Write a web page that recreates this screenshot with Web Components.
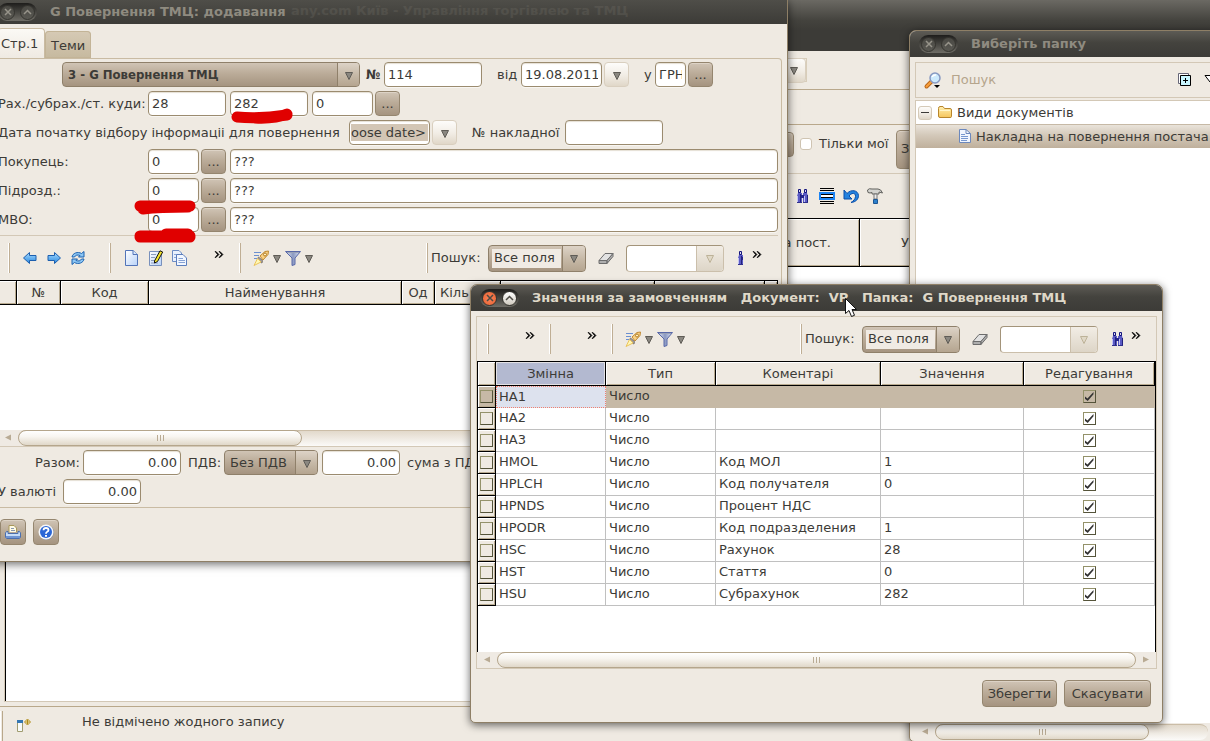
<!DOCTYPE html>
<html lang="uk">
<head>
<meta charset="utf-8">
<title>Повернення ТМЦ</title>
<style>
html,body{margin:0;height:100%;overflow:hidden;background:#efeae2}
body{font:13px/16px "DejaVu Sans",Verdana,sans-serif;color:#3c3b37}
</style>
</head>
<body>
<trade-desktop></trade-desktop>
<script>
const BASE = `
*{box-sizing:border-box}
button,input,select{font:inherit;color:inherit;margin:0}
:host([hidden]){display:none}
`;
const TAN = 'linear-gradient(#d0c4b5,#bbac99 45%,#a59480)';
const CREAM = 'linear-gradient(#fdfcfa,#f1ece4 55%,#e0d7c8)';
function define(name, render, after) {
  customElements.define(name, class extends HTMLElement {
    constructor() { super(); this.attachShadow({ mode: 'open' }); }
    connectedCallback() {
      if (this.shadowRoot.childNodes.length) return;
      const t = document.createElement('template');
      t.innerHTML = render(this);
      this.shadowRoot.append(t.content.cloneNode(true));
      if (after) after(this);
    }
  });
}
const attr = (el, n, d = '') => el.hasAttribute(n) ? el.getAttribute(n) : d;

/* ---------- icons ---------- */
const binoBody = `<path d="M3 2h3v3h1v10H2V8l1-3zM9 2h3v3l1 3v7H8V5h1z" fill="#5a5ac4"/><path d="M3.500 1.500h2v3h-2zM9.500 1.500h2v3h-2z" fill="#d8d8f4" stroke="#14147c"/><path d="M6 7h3v3H6z" fill="#23238c"/><path d="M2 8h1v6H2zM9 8h1v6H9z" fill="#c4c4f4"/><path d="M5 6h1v9H5zM12 7h1v8h-1z" fill="#22227e"/><path d="M2 14h5v1H2zM8 14h5v1H8z" fill="#30308c"/>`;
const ICONS = {
  back: `<path d="M1.500 8L7.500 2.500V5.500H14V10.500H7.500V13.500Z" fill="url(#g)" stroke="#1c5fae"/>`,
  forward: `<path d="M14.500 8L8.500 2.500V5.500H2V10.500H8.500V13.500Z" fill="url(#g)" stroke="#1c5fae"/>`,
  refresh: `<path d="M2 7a6 5 0 0 1 9.500-3.500L14 1.500V7H8.500L10 5.500A4 3 0 0 0 4.500 7Z" fill="#8cc6f4" stroke="#1c62b0"/><path d="M14 9a6 5 0 0 1-9.500 3.500L2 14.500V9h5.500L6 10.500A4 3 0 0 0 11.500 9Z" fill="#8cc6f4" stroke="#1c62b0"/>`,
  blank: `<path d="M2.500 .500H10L14.500 4.500V15.500H2.500Z" fill="url(#p)" stroke="#5274b8"/><path d="M10 .500V4.500H14.500" fill="#d8e6fa" stroke="#5274b8"/>`,
  edit: `<path d="M2.500 1.500H14.500V15.500H2.500Z" fill="url(#p)" stroke="#7890bc"/><path d="M4 4.500H9M4 7.500H8M4 10.500H11M4 13H11" stroke="#8a9cbc"/><path d="M7.500 11L13 .800L15.700 2L10.500 11.500L7.500 13Z" fill="#f5e42a" stroke="#111"/>`,
  copy: `<path d="M1.500 .500H8L10.500 3V11.500H1.500Z" fill="#e9f1fd" stroke="#6c8cc4"/><path d="M3 4.500H9M3 7.500H9" stroke="#8ca8d8"/><path d="M5.500 4.500H12L15.500 8V15.500H5.500Z" fill="#f2f7ff" stroke="#5c7ebc"/><path d="M7.500 8.500H12M7.500 10.500H14M7.500 12.500H14" stroke="#86a2d4"/>`,
  rocket: `<path d="M1 2.500H8M1 5.500H6M1 8.500H4" stroke="#6b8fd0"/><path d="M7 6L12 1.500L15.500 1L15 4.500L10 10Z" fill="#f9d184" stroke="#c08a34"/><circle cx="12" cy="4.500" r="1.500" fill="#fff3c8" stroke="#b07a24"/><path d="M5.500 7L9.500 10.500L9 13L7 12L4.500 9Z" fill="#a59d96" stroke="#817b76"/><path d="M4.500 8.500L1 15.500L8 12Z" fill="#fff8b4" stroke="#ebc45c"/>`,
  funnel: `<path d="M.500 1.500H15.500L10 8V14.500L7 15.500V8Z" fill="url(#f)" stroke="#5868a8"/><path d="M2 2.500H14" stroke="#99a2b8"/>`,
  eraser: `<path d="M1 10.500L7 3.500H15L9 10.500Z" fill="#e2e2e2" stroke="#6c6c6c"/><path d="M1 10.500H9V13.500H1ZM9 10.500L15 3.500V6.500L9 13.500Z" fill="#aeaeae" stroke="#6c6c6c"/>`,
  bino: binoBody,
  rows: `<path d="M1 .500H15M1 2.500H15M1 13.500H15M1 15.500H15" stroke="#000"/><path d="M1 5H15V11H1Z" fill="#fff" stroke="#1c84f4" stroke-width="2"/><path d="M2 6.500H14M2 9.500H14" stroke="#000"/>`,
  undo: `<path d="M1 2V11H9L6 8C9 4 13 5 12.500 8.500C12.300 11 10.500 13 8 14.500C13 14 15.500 11 15.500 7.500C15 2 8 1 4 5.500Z" fill="#2382e0" stroke="#0c4ea8"/>`,
  hammer: `<path d="M.500 2Q2 0 5 1H11Q14 1 15.500 5L12 4V6H5V4.500L3 5L1 4.500Z" fill="#d4d4d0" stroke="#62625e"/><path d="M7 6H10V11H7Z" fill="#ececec" stroke="#777"/><path d="M6.500 11.500H10.500V15.500H6.500Z" fill="#2d80cc" stroke="#1d5794"/>`,
  search: `<path d="M1.500 14.500L6.500 9.500" stroke="#b8661a" stroke-width="4" stroke-linecap="round"/><path d="M1.500 14.500L6.500 9.500" stroke="#f9a03c" stroke-width="2" stroke-linecap="round"/><circle cx="10" cy="6" r="5" fill="#cdeafc" stroke="#8798c0" stroke-width="1.500"/><path d="M7 5A4 4 0 0 1 11 3" stroke="#fff" fill="none" stroke-width="1.500"/><path d="M9 13H15L12 16Z" fill="#000"/>`,
  expand: `<path d="M1.500 1.500H11.500V11.500H1.500Z" fill="#fff" stroke="#667"/><path d="M3.500 3.500H13.500V13.500H3.500Z" fill="#c9f6ff" stroke="#000"/><path d="M6 8.500H11M8.500 6V11" stroke="#000"/>`,
  folder: `<path d="M1.500 4.500Q1.500 2.500 3 2.500H6L7.500 4.500H13Q14.500 4.500 14.500 6V12.500Q14.500 13.500 13 13.500H3Q1.500 13.500 1.500 12Z" fill="url(#y)" stroke="#b8862c"/><path d="M3 6.500H13" stroke="#fff6cc"/>`,
  doc: `<path d="M2.500 1.500H9L13.500 5.500V14.500H2.500Z" fill="#f1f6fe" stroke="#6c88bc"/><path d="M9 1.500V5.500H13.500" fill="none" stroke="#6c88bc"/><path d="M4 6.500H8M4 8.500H11M4 10.500H11M4 12.500H10" stroke="#7898d0"/>`,
  print: `<path d="M4 8V1.500H9L11.500 4V8" fill="#fffbe6" stroke="#a89858"/><path d="M6 4.500H9M6 6.500H10" stroke="#8897b0"/><path d="M1.500 7.500H3V9.500H13V7.500H14.500L15.500 9V13.500L14 14.500H2L.500 13.500V9Z" fill="#c6dcf8" stroke="#4b6fae"/><path d="M1 12H15V14H1Z" fill="#6f94d2"/>`,
  help: `<circle cx="8.500" cy="8.500" r="7.500" fill="#8b93a0"/><circle cx="8" cy="8" r="7.500" fill="#f4f6fa"/><circle cx="8" cy="8" r="6" fill="#2a66d6"/><path d="M5.500 6.200Q5.600 4 8 4Q10.500 4 10.500 6Q10.500 7 9.200 7.800Q8 8.500 8 9.800" fill="none" stroke="#fff" stroke-width="1.800"/><path d="M7 11H9V12.800H7Z" fill="#fff"/>`,
  newview: `<path d="M1.500 5.500H6.500V15.500H1.500Z" fill="#f8fbfa" stroke="#a09c70"/><path d="M1 4H7V7H1Z" fill="#3477b4"/><path d="M11.500 3L14.500 6L11.500 9L8.500 6Z" fill="#fff8c8" stroke="#ae8a1c"/><path d="M11.500 4V8M9.500 6H13.500" stroke="#ae8a1c"/>`,
  more: `<path d="M1 1.500H2L5 4.500L2 7.500H1L3.500 4.500ZM5 1.500H6L9 4.500L6 7.500H5L7.500 4.500Z" fill="#000" stroke="#000" stroke-width=".6"/>`,
  down: `<path d="M1.500 2.500H8.500L5 9.500Z" fill="#8a8780" stroke="#5f5c56"/>`,
  downpale: `<path d="M1.500 2.500H8.500L5 9.500Z" fill="#e0d8c6" stroke="#bdb298"/>`,
  left: `<path d="M7 1.500V7.500L1 4.500Z" fill="#b9ab94"/>`,
  right: `<path d="M1 1.500V7.500L7 4.500Z" fill="#b9ab94"/>`
};
const SMALL = { more: 10, down: 10, downpale: 10, left: 8, right: 8 };
define('tool-icon', el => {
  const n = attr(el, 'name'), s = SMALL[n] || 16;
  return `<style>:host{display:inline-flex;flex:none;width:${s}px;height:${s === 16 ? 17 : 10}px}svg{display:block;overflow:visible}</style>
  <svg width="${s}" height="${s === 16 ? 17 : 10}" fill="none" aria-hidden="true"><defs>
  <linearGradient id="g" x2="0" y2="1"><stop stop-color="#a8dcff"/><stop offset="1" stop-color="#2888e0"/></linearGradient>
  <linearGradient id="p" x2="1" y2="1"><stop stop-color="#fff"/><stop offset="1" stop-color="#b8d2f8"/></linearGradient>
  <linearGradient id="f"><stop stop-color="#e8eefa"/><stop offset=".5" stop-color="#8a98c0"/><stop offset="1" stop-color="#dfe6f8"/></linearGradient>
  <linearGradient id="y" x2="0" y2="1"><stop stop-color="#fff0b0"/><stop offset="1" stop-color="#f5c55c"/></linearGradient></defs>${ICONS[n]}</svg>`;
});

/* ---------- small controls ---------- */
define('text-field', el => `<style>${BASE}
:host{display:flex;align-items:center}
label{flex:none;width:var(--label,auto);white-space:nowrap}
:host([bold]) label{font-family:"DejaVu Sans Condensed","DejaVu Sans",sans-serif;font-weight:bold}
input{flex:1;min-width:0;height:25px;padding:0 3px;background:#fff;border:1px solid #9b8b6f;border-radius:4px;box-shadow:inset 0 1px 1px #e5dfd4,0 1px 0 #f8f6f2;outline:0}
:host([width]) input{flex:none;width:${attr(el, 'width', 50)}px}
:host([numeric]) input{text-align:right}
:host([picked]) input{padding:3px 1px;background:linear-gradient(#d3c6b5,#d3c6b5) content-box,#fff}
</style>${el.hasAttribute('label') ? `<label for="i">${attr(el, 'label')}</label>` : ''}<input id="i" value="${attr(el, 'value').replace('>', '&gt;')}" ${el.hasAttribute('label') ? '' : `aria-label="${attr(el, 'hint', 'Значення')}"`}>`);

define('push-button', el => `<style>${BASE}
:host{display:inline-flex;flex:none}
button{display:flex;align-items:center;justify-content:center;width:25px;height:25px;padding:0;background:${TAN};border:1px solid #95866f;border-radius:4px;box-shadow:inset 0 1px 0 #ddd3c6;white-space:nowrap}
:host([pale]) button{background:${CREAM};border-color:#d9cfbf;box-shadow:none}
:host([square]) button{width:26px;height:26px}
:host([wide]) button{width:auto;min-width:var(--min,75px);height:27px;padding:0 4px}
:host([tall]) button{width:60px;height:39px;padding:0 4px;justify-content:flex-start}
</style><button type="button" aria-label="${attr(el, 'hint', 'Дія')}"><slot></slot></button>`,
  el => { if (!el.hasAttribute('hint')) el.shadowRoot.querySelector('button').removeAttribute('aria-label'); });

define('combo-box', el => `<style>${BASE}
:host{display:flex;align-items:center}
label{flex:none;width:var(--label,auto);white-space:nowrap}
.box{display:grid;grid-template-columns:1fr 22px;flex:1;height:25px;background:${TAN};border:1px solid #8f806a;border-radius:4px;overflow:hidden}
select{grid-area:1/1/2/3;appearance:none;width:100%;padding:0 26px 0 5px;border:0;background:transparent;outline:0}
.arrow{grid-area:1/2;display:flex;align-items:center;justify-content:center;border-left:1px solid #8f806a;background:linear-gradient(#ddd3c7,#c7baa8 50%,#b5a590);pointer-events:none}
:host([bold]) select{font-family:"DejaVu Sans Condensed","DejaVu Sans",sans-serif;font-weight:bold}
:host([framed]) .box{height:27px;grid-template-columns:1fr 23px}
:host([framed]) select{grid-area:1/1;margin:3px;width:calc(100% - 4px);height:19px;padding:0 2px;background:#f0ebe4}
:host([white]) .box{height:27px;grid-template-columns:1fr 27px;background:#fff;border-color:#a3947a #cbbfab #cbbfab #a3947a}
:host([white]) .arrow{background:linear-gradient(#f2ede5,#ddd5c7);border-left:1px solid #cbbfab}
</style>${el.hasAttribute('label') ? `<label for="s">${attr(el, 'label')}</label>` : ''}<span class="box"><select id="s" ${el.hasAttribute('label') ? '' : `aria-label="${attr(el, 'hint', 'Вибір')}"`}><option>${attr(el, 'value')}</option></select><span class="arrow"><tool-icon name="${el.hasAttribute('white') ? 'downpale' : 'down'}"></tool-icon></span></span>`);

define('scroll-bar', el => `<style>${BASE}
:host{display:grid;grid-template-columns:20px 1fr 20px;align-items:center;height:16px;background:#efeae3}
tool-icon{justify-self:center}
.track{height:16px;border-top:1px solid #cbbda7;border-radius:8px;background:linear-gradient(#e2d9cb,#fbfaf8)}
.thumb{display:flex;align-items:center;justify-content:center;gap:2px;width:var(--thumb,100%);height:16px;margin-top:-1px;border:1px solid #b5a68c;border-radius:8px;background:linear-gradient(#fff,#f8f5f0 40%,#e0d8c9)}
i{width:1px;height:6px;border-left:1px solid #b9ab94}
</style><tool-icon name="left"></tool-icon><div class="track"><div class="thumb"><i></i><i></i><i></i></div></div><tool-icon name="right"></tool-icon>`);

/* ---------- toolbars ---------- */
define('tool-group', el => `<style>${BASE}
:host{display:flex;align-items:center;gap:8px;height:30px;padding-left:13px;border-left:1px solid #fff;box-shadow:inset 1px 0 0 #bfae94}
::slotted([name=down]){margin:0 -5px}
::slotted([name=more]){margin-left:auto}
</style><slot></slot>`);

define('search-group', el => `<style>${BASE}
:host{display:flex;align-items:center;flex:none;height:30px;padding-left:4px;border-left:1px solid #fff;box-shadow:inset 1px 0 0 #bfae94}
.field{--label:57px;width:155px}
.value{width:98px}
.erase{margin:0 12px}
.find{margin-left:12px;margin-right:5px}
:host([clipped]) .find{width:7px;overflow:hidden;margin-right:9px}
.more{margin-bottom:6px}
</style><combo-box class="field" framed label="Пошук:" value="Все поля"></combo-box><tool-icon class="erase" name="eraser"></tool-icon><combo-box class="value" white hint="Текст пошуку"></combo-box><tool-icon class="find" name="bino"></tool-icon><tool-icon class="more" name="more"></tool-icon>`);

/* ---------- window frame ---------- */
define('app-window', el => `<style>${BASE}
:host{display:flex;flex-direction:column;border:1px solid #8e7f66;border-radius:7px 7px 5px 5px;background:#efeae2;box-shadow:0 2px 9px rgba(0,0,0,.6)}
header{display:flex;flex:none;align-items:center;height:26px;padding-left:9px;gap:13px;border-radius:6px 6px 0 0;background:linear-gradient(#5d5b55,#44433e 45%,#3c3b37);font-weight:bold;color:#8f8b80;white-space:pre}
:host([active]) header{color:#dfd8c8}
h1{margin:0;font:inherit}
.pill{display:flex;align-items:center;justify-content:space-between;width:39px;height:18px;padding:0 2px;border-radius:9px;background:linear-gradient(#1e1d1b,#6f6d66)}
.pill button{display:flex;align-items:center;justify-content:center;width:15px;height:15px;padding:0;border:1px solid #35342f;border-radius:50%;background:linear-gradient(#4a4944,#595852)}
svg{fill:none;stroke:#97948a;stroke-width:1.500}
:host([active]) .close{background:radial-gradient(#f9845b,#e8602f)}
:host([active]) .roll{background:linear-gradient(#fff,#cfcabf)}
:host([active]) svg{stroke:#4c4a44}
:host([offscreen]){border-radius:0;background:none}
:host([offscreen]) header{height:24px;padding-left:6px;border-radius:0;background:linear-gradient(rgba(76,75,70,.91),rgba(60,59,55,.91))}
:host([offscreen]) .body{background:#efeae2}
.body{display:flex;flex-direction:column;flex:1;min-height:0}
</style><header><span class="pill"><button class="close" type="button" aria-label="Закрити"><svg width="8" height="8"><path d="M1 1L7 7M7 1L1 7"/></svg></button><button class="roll" type="button" aria-label="Згорнути"><svg width="9" height="6"><path d="M1 5L4.500 1.500L8 5"/></svg></button></span><h1>${attr(el, 'heading')}</h1></header><div class="body"><slot></slot></div>`);

/* ---------- main window behind ---------- */
define('main-window', () => `<style>${BASE}
:host{display:flex;flex-direction:column;background:#efeae2}
header{flex:none;height:51px;padding:3px 0 0 291px;background:linear-gradient(#6b6963,#44433e 40%,#3c3b37 60%);color:#dfd8c8;font-weight:bold;white-space:nowrap}
h1{margin:0;font:inherit}
.first{flex:none;height:39px;padding-top:7px;border-bottom:1px solid #b9a88b}
.first div{display:flex;justify-content:flex-end;align-items:center;width:807px;height:24px;border:1px solid #d8cdb9}
.second{flex:none;height:35px;border-bottom:1px solid #b9a88b}
.third{display:flex;flex:none;align-items:center;height:49px;padding-left:769px;border-bottom:1px solid #d3c8b6}
label{display:flex;flex:none;align-items:center;width:102px;padding:0 0 10px 6px;gap:7px;white-space:nowrap}
.lead{padding-bottom:10px}
input{appearance:none;width:12px;height:12px;background:#fff;border:1px solid #cfc4b2;border-radius:3px}
.tools{display:flex;flex:none;align-items:center;gap:8px;height:44px;padding-left:795px}
table{flex:none;width:100%;height:49px;table-layout:fixed;border-collapse:separate;border-spacing:0;border-top:1px solid #000;border-bottom:1px solid #000}
th{font-weight:normal;padding:0;border-right:1px solid #000;box-shadow:inset 1px 1px 0 #fff,inset -1px -1px 0 #b9ab90}
.a{width:860px;text-align:right;padding-right:28px}
.b{text-align:left;padding-left:41px}
.area{flex:1;margin-left:4px;background:#fff;border:solid #d3c8b6;border-width:0 0 1px 1px;box-shadow:inset 1px 0 0 #000}
footer{display:flex;flex:none;align-items:center;height:35px;margin-top:4px;border-top:1px solid #b9a88b}
footer span{align-self:stretch;margin-top:4px;width:3px;border-right:1px solid #b9a88b;border-left:1px solid #fff}
footer tool-icon{margin:0 50px 0 13px}
p{margin:0 0 5px}
</style>
<header><h1>any.com Київ - Управління торгівлею та ТМЦ</h1></header>
<div class="first"><div><push-button pale hint="Список"><tool-icon name="down"></tool-icon></push-button></div></div>
<div class="second"></div>
<div class="third"><push-button class="lead" hint="Вибір"></push-button><label><input type="checkbox">Тільки мої</label><push-button tall>З</push-button></div>
<div class="tools"><tool-icon name="bino"></tool-icon><tool-icon name="rows"></tool-icon><tool-icon name="undo"></tool-icon><tool-icon name="hammer"></tool-icon></div>
<table><tr><th class="a">а пост.</th><th class="b">У</th></tr></table>
<div class="area"></div>
<footer><span></span><tool-icon name="newview"></tool-icon><p>Не відмічено жодного запису</p></footer>`);

/* ---------- return document form ---------- */
define('return-form', () => `<style>${BASE}
:host{display:flex;flex-direction:column;flex:1;min-height:0;padding:0 5px 0 6px}
nav{display:flex;flex:none;align-items:flex-end;height:34px}
nav button{height:27px;padding:2px 6px 0;border:0;border-radius:4px 4px 0 0;background:linear-gradient(#d6cab5,#c6b99f);box-shadow:inset 0 0 0 1px #c3b497}
nav button:first-child{width:47px;height:30px;padding:0 0 0 3px;text-align:left;background:linear-gradient(#fbf9f5,#efeae2);border-right:1px solid #c9bba3;border-top:1px solid #c9bba3;box-shadow:none}
.page{display:flex;flex-direction:column;flex:none;height:450px;border:solid #c9bba3;border-width:1px 1px 1px 0;border-radius:0 4px 0 0;padding:3px 3px 3px 0}
.rows{display:flex;flex-direction:column;gap:4px}
.row{display:flex;align-items:center;gap:4px;--label:150px}
.pair{display:flex;align-items:center;gap:2px}
.head{padding-left:64px}
.head combo-box{width:298px}
.grow{flex:1}
.no{--label:18px;margin:0 11px 0 2px}
.from{--label:24px}
.in{--label:11px;margin-left:11px}
.date{--label:351px}
.bill{--label:93px;margin-left:11px}
.list{display:flex;flex-direction:column;flex:1;margin:3px 0;border:solid #d3c8b6;border-width:1px 0 1px}
.tools{display:flex;flex:none;align-items:center;height:44px;padding-left:10px}
.g1{width:101px}.g2{width:130px}.g3{flex:1}
.g2 tool-icon[name=more]{margin:0 0 6px 19px}
search-group{margin-right:16px}
table{width:100%;height:25px;flex:none;table-layout:fixed;border-collapse:separate;border-spacing:0;border-top:1px solid #000;border-bottom:1px solid #000}
th{font-weight:normal;padding:0;white-space:nowrap;overflow:hidden;border-right:1px solid #000;box-shadow:inset 1px 1px 0 #fff,inset -1px -1px 0 #b9ab90}
.cut{text-align:left;padding-left:5px}
.void{flex:1;background:#fff}
scroll-bar{--thumb:284px}
.sum{padding-left:37px;gap:7px}
.total{--label:48px}
.vat{--label:36px;width:130px;margin-right:-3px}
.cur{--label:65px}
.acts{display:flex;gap:7px;padding-top:11px}
.acts push-button:first-child{margin-left:2px}
</style>
<nav><button type="button">Стр.1</button><button type="button">Теми</button></nav>
<div class="page">
 <div class="rows">
  <div class="row head"><combo-box bold value="3 - G Повернення ТМЦ" hint="Тип документа"></combo-box><text-field class="no" bold label="№" width="98" value="114"></text-field><div class="pair"><text-field class="from" label="від" width="81" value="19.08.2011"></text-field><push-button pale hint="Дата"><tool-icon name="down"></tool-icon></push-button></div><div class="pair"><text-field class="in" label="у" width="31" value="ГРН"></text-field><push-button>...</push-button></div></div>
  <div class="row"><text-field label="Рах./субрах./ст. куди:" width="78" value="28"></text-field><text-field width="78" value="282" hint="Субрахунок"></text-field><div class="pair"><text-field width="61" value="0" hint="Стаття"></text-field><push-button>...</push-button></div></div>
  <div class="row"><div class="pair"><text-field class="date" picked label="Дата початку відбору інформаціі для повернення" width="81" value="oose date>"></text-field><push-button pale hint="Дата"><tool-icon name="down"></tool-icon></push-button></div><text-field class="bill" label="№ накладної" width="98"></text-field></div>
  <div class="row"><div class="pair"><text-field label="Покупець:" width="51" value="0"></text-field><push-button>...</push-button></div><text-field class="grow" value="???"></text-field></div>
  <div class="row"><div class="pair"><text-field label="Підрозд.:" width="51" value="0"></text-field><push-button>...</push-button></div><text-field class="grow" value="???"></text-field></div>
  <div class="row"><div class="pair"><text-field label="МВО:" width="51" value="0"></text-field><push-button>...</push-button></div><text-field class="grow" value="???"></text-field></div>
 </div>
 <div class="list">
  <div class="tools"><tool-group class="g1"><tool-icon name="back"></tool-icon><tool-icon name="forward"></tool-icon><tool-icon name="refresh"></tool-icon></tool-group><tool-group class="g2"><tool-icon name="blank"></tool-icon><tool-icon name="edit"></tool-icon><tool-icon name="copy"></tool-icon><tool-icon name="more"></tool-icon></tool-group><tool-group class="g3"><tool-icon name="rocket"></tool-icon><tool-icon name="down"></tool-icon><tool-icon name="funnel"></tool-icon><tool-icon name="down"></tool-icon></tool-group><search-group clipped></search-group></div>
  <table><colgroup><col style="width:19px"><col style="width:44px"><col style="width:88px"><col style="width:253px"><col style="width:33px"><col style="width:66px"><col style="width:154px"><col style="width:110px"><col></colgroup><tr><th></th><th>№</th><th>Код</th><th>Найменування</th><th>Од</th><th class="cut">Кіль</th><th></th><th></th><th></th></tr></table>
  <div class="void"></div>
  <scroll-bar></scroll-bar>
 </div>
 <div class="rows">
  <div class="row sum"><text-field class="total" numeric label="Разом:" width="98" value="0.00"></text-field><combo-box class="vat" label="ПДВ:" value="Без ПДВ"></combo-box><text-field numeric width="78" value="0.00" hint="ПДВ"></text-field><span>сума з ПДВ</span></div>
  <div class="row"><text-field class="cur" numeric label="У валюті" width="78" value="0.00"></text-field></div>
 </div>
</div>
<div class="acts"><push-button square hint="Друк"><tool-icon name="print"></tool-icon></push-button><push-button square hint="Довідка"><tool-icon name="help"></tool-icon></push-button></div>`);

/* ---------- folder picker ---------- */
define('folder-picker', () => `<style>${BASE}
:host{display:flex;flex-direction:column;flex:1;min-height:0;padding:5px 0 0 5px}
.find{display:flex;flex:none;align-items:center;height:36px;padding-left:9px;margin-bottom:2px;border:1px solid #d3c8b6}
.find input{flex:none;width:206px;margin:0 20px 0 10px;padding:0;border:0;background:none;outline:0}
.find input::placeholder{color:#b5a58c;opacity:1}
.find svg{margin-left:11px;flex:none}
ul{flex:1;margin:0;padding:0;list-style:none;background:#fff;border:solid #d3c8b6;border-width:1px 0 0 1px}
li{display:flex;align-items:center;gap:4px;height:23px;padding-left:2px;white-space:nowrap}
li button{width:14px;height:14px;padding:0;margin-right:1px;border:1px solid #d5cab8;border-radius:3px;background:${CREAM};display:flex;align-items:center;justify-content:center}
li button::before{content:"";width:8px;height:1px;background:#3c3b37}
.on{height:24px;padding-left:41px;gap:3px;background:linear-gradient(#e9e3da,#d3c8b9 45%,#bfb09c);border-top:1px solid #c6b9a6}
scroll-bar{--thumb:214px;height:18px;flex:none;grid-template-columns:20px 273px 20px}
</style>
<div class="find"><tool-icon name="search"></tool-icon><input placeholder="Пошук" aria-label="Пошук"><tool-icon name="expand"></tool-icon><svg width="12" height="12"><path d="M1 1.500H11L6 8Z" fill="#fff" stroke="#000"/></svg></div>
<ul><li><button type="button" aria-label="Згорнути гілку"></button><tool-icon name="folder"></tool-icon><span>Види документів</span></li><li class="on"><tool-icon name="doc"></tool-icon><span>Накладна на повернення постача</span></li></ul>
<scroll-bar></scroll-bar>`);

/* ---------- default values dialog ---------- */
const VALUES = [['HA1', '', ''], ['HA2', '', ''], ['HA3', '', ''], ['HMOL', 'Код МОЛ', '1'], ['HPLCH', 'Код получателя', '0'], ['HPNDS', 'Процент НДС', ''], ['HPODR', 'Код подразделения', '1'], ['HSC', 'Рахунок', '28'], ['HST', 'Стаття', '0'], ['HSU', 'Субрахунок', '282']];
define('values-dialog', () => `<style>${BASE}
:host{display:flex;flex-direction:column;flex:1;min-height:0;padding:5px 5px 0}
.panel{display:flex;flex-direction:column;height:353px;border:1px solid #d3c8b6}
.tools{display:flex;flex:none;align-items:center;height:44px;padding-left:10px}
.g1{width:62px}.g2{width:62px}.g3{flex:1}
.g1 tool-icon,.g2 tool-icon{margin:0 14px 6px auto}
search-group{margin-right:15px}
.area{flex:1;background:#fff;border:solid #000;border-width:1px 1px 0 1px}
table{width:100%;table-layout:fixed;border-collapse:separate;border-spacing:0}
thead th{height:24px;padding:0;font-weight:normal;border-right:1px solid #000;border-bottom:1px solid #000;background:#efeae2;box-shadow:inset 1px 1px 0 #fff,inset -1px -1px 0 #b9ab90}
thead .hot{background:#b3b9d0;box-shadow:inset 0 0 0 1px #e3e1e4}
td{height:22px;padding:0 0 1px 3px;border:solid #c0c0c0;border-width:0 1px 1px 0;white-space:nowrap}
td:first-child{padding:0;border-color:#000;background:#efeae2;box-shadow:inset 1px 1px 0 #fff,inset -1px -1px 0 #b9ab90;text-align:center}
td:last-child{padding:0;text-align:center}
input{appearance:none;display:block;width:13px;height:13px;margin:0 auto;border:1px solid;border-color:#94926a #55543a #55543a #94926a}
input:checked::before{content:"";display:block;width:9px;height:9px;margin:1px;background:#333;clip-path:polygon(0 45%,33% 72%,100% 0,100% 25%,36% 100%,0 72%)}
.sel td{background:#c6b9a6;border-color:#c6b9a6}
.sel td:first-child{border-color:#000}
.sel td:nth-child(2){background:#dde2ee;padding-left:2px;border:1px dotted #f08070}
scroll-bar{flex:none}
footer{display:flex;justify-content:flex-end;gap:7px;padding:11px 6px 0 0}
footer push-button:last-child{--min:87px}
</style>
<div class="panel">
<div class="tools"><tool-group class="g1"><tool-icon name="more"></tool-icon></tool-group><tool-group class="g2"><tool-icon name="more"></tool-icon></tool-group><tool-group class="g3"><tool-icon name="rocket"></tool-icon><tool-icon name="down"></tool-icon><tool-icon name="funnel"></tool-icon><tool-icon name="down"></tool-icon></tool-group><search-group></search-group></div>
<div class="area"><table><colgroup><col style="width:18px"><col style="width:110px"><col style="width:110px"><col style="width:165px"><col style="width:143px"><col></colgroup>
<thead><tr><th></th><th class="hot">Змінна</th><th>Тип</th><th>Коментарі</th><th>Значення</th><th>Редагування</th></tr></thead>
<tbody>${VALUES.map((v, i) => `<tr${i ? '' : ' class="sel"'}><td><input type="checkbox" aria-label="Рядок ${v[0]}"></td><td>${v[0]}</td><td>Число</td><td>${v[1]}</td><td>${v[2]}</td><td><input type="checkbox" checked aria-label="Редагування ${v[0]}"></td></tr>`).join('')}</tbody></table></div>
<scroll-bar></scroll-bar>
</div>
<footer><push-button wide>Зберегти</push-button><push-button wide>Скасувати</push-button></footer>`);

/* ---------- desktop: free placement of windows ---------- */
define('trade-desktop', () => `<style>${BASE}
:host{display:block;position:relative;height:100vh;min-height:741px;overflow:hidden}
main-window{position:absolute;inset:0}
.form{position:absolute;left:-9px;top:-1px;width:797px;height:563px}
.folder{position:absolute;left:909px;right:-20px;top:30px;bottom:-1px}
.values{position:absolute;left:470px;top:284px;width:693px;height:439px}
.marks{position:absolute;left:130px;top:100px}
.pointer{position:absolute;left:844px;top:297px}
</style>
<main-window></main-window>
<app-window class="folder" heading="Виберіть папку"><folder-picker></folder-picker></app-window>
<app-window class="form" offscreen heading="G Повернення ТМЦ: додавання"><return-form></return-form></app-window>
<svg class="marks" width="170" height="150" fill="none" stroke="#e00000" stroke-width="11" stroke-linecap="round" stroke-linejoin="round" aria-hidden="true"><path d="M107 17Q130 19 157 15M125 18Q145 19 157 14M10 106H60M13 109Q30 107 58 107M10 136H60M36 134H58M10 137H60"/></svg>
<app-window class="values" active heading="Значення за замовченням   Документ:  VP   Папка:  G Повернення ТМЦ"><values-dialog></values-dialog></app-window>
<svg class="pointer" width="15" height="22" aria-hidden="true"><path d="M1.500 1.500V16.500L5 13.500L7.500 19.500L10.500 18.300L8 12.500H12.500Z" fill="#fff" stroke="#111"/></svg>`);
</script>
</body>
</html>
